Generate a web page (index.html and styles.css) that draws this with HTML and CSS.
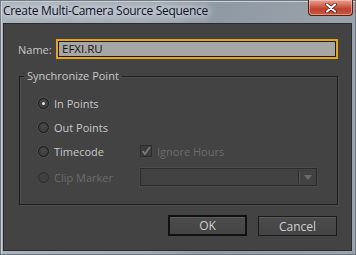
FILE: index.html
```html
<!DOCTYPE html>
<html>
<head>
<meta charset="utf-8">
<link rel="stylesheet" href="styles.css">
</head>
<body>
<div class="window">
  <div class="titlebar">
    <div class="title">Create Multi-Camera Source Sequence</div>
    <div class="close">
      <svg width="14" height="10" viewBox="0 0 14 10"><path d="M3 1.5 L11 8.5 M11 1.5 L3 8.5" stroke="#3a1b18" stroke-width="3.6" stroke-linecap="round"/><path d="M3 1.5 L11 8.5 M11 1.5 L3 8.5" stroke="#fff" stroke-width="2.2" stroke-linecap="round"/></svg>
    </div>
  </div>
  <div class="client">
    <div class="name-row">
      <label class="lbl">Name:</label>
      <div class="input">EFXI.RU</div>
    </div>
    <fieldset class="group">
      <legend class="legend">Synchronize Point</legend>
      <div class="grid">
        <div class="opt"><span class="radio on"></span><span>In Points</span></div>
        <div></div>
        <div class="opt"><span class="radio"></span><span>Out Points</span></div>
        <div></div>
        <div class="opt"><span class="radio"></span><span>Timecode</span></div>
        <div class="opt dis"><span class="check"><svg width="10" height="10" viewBox="0 0 10 10"><path d="M1.5 5 L4 8 L9 1" fill="none" stroke="#7a7a7a" stroke-width="1.8"/></svg></span><span>Ignore Hours</span></div>
        <div class="opt dis"><span class="radio off"></span><span>Clip Marker</span></div>
        <div class="select"><span class="sel-body"></span><span class="sel-arrow"><svg width="8" height="5" viewBox="0 0 8 5"><path d="M0 0 H8 L4 5 Z" fill="#6a6a6a"/></svg></span></div>
      </div>
    </fieldset>
    <div class="buttons">
      <div class="btn default">OK</div>
      <div class="btn">Cancel</div>
    </div>
  </div>
</div>
</body>
</html>
```
FILE: styles.css
```css
html, body {
  margin: 0;
  padding: 0;
}
body {
  width: 356px;
  height: 255px;
  overflow: hidden;
  font-family: "Open Sans", "Noto Sans", sans-serif;
}
.window {
  width: 356px;
  height: 255px;
  box-sizing: border-box;
  background: linear-gradient(90deg, #a9b1b9 0%, #a2abb4 40%, #8f99a3 60%, #9aa3ac 100%);
  border: 1px solid #6d7680;
  box-shadow: inset 1px 1px 0 #c9d0d6;
  display: flex;
  flex-direction: column;
}
.titlebar {
  height: 22px;
  display: flex;
  align-items: flex-start;
}
.title {
  margin: 2px 0 0 2px;
  font-family: "Open Sans", sans-serif;
  font-size: 12px;
  color: #10102a;
  letter-spacing: -0.3px;
  line-height: 16px;
  text-shadow: 0 0 6px #e6eaee, 0 0 10px #dde2e7, 0 0 14px #d5dbe0;
}
.close {
  margin-left: auto;
  margin-right: 2px;
  margin-top: -1px;
  width: 45px;
  height: 16px;
  box-sizing: border-box;
  border: 1px solid #5a1e18;
  border-top: none;
  border-radius: 0 0 4px 4px;
  background: linear-gradient(#e9a393 0%, #d46a57 35%, #c0412d 60%, #c95a3d 100%);
  box-shadow: inset 0 0 0 1px rgba(255,220,210,0.45);
  display: flex;
  align-items: center;
  justify-content: center;
}
.client {
  margin: 0 3px 0 2px;
  height: 228px;
  box-sizing: border-box;
  background: #434343;
  border: 1px solid #2c2c2c;
  color: #c6c6c6;
  font-size: 11px;
  display: flex;
  flex-direction: column;
}
.name-row {
  display: flex;
  align-items: center;
  margin: 15px 0 0 14px;
}
.lbl {
  width: 38px;
}
.input {
  width: 282px;
  height: 20px;
  box-sizing: border-box;
  border: 2px solid #e8a418;
  background: #a6a6a6;
  color: #161616;
  font-size: 11.5px;
  line-height: 16px;
  padding-left: 4px;
  box-shadow: inset 0 0 0 1px #1c1c1c;
}
.group {
  margin: 11px 0 0 15px;
  width: 319px;
  height: 135px;
  box-sizing: border-box;
  border: 1px solid #1e1e1e;
  box-shadow: 1px 1px 0 #4e4e4e, inset 1px 1px 0 #4e4e4e;
  padding: 9px 0 0 0;
}
.legend {
  padding: 0 3px;
  margin-left: 4px;
  font-size: 11px;
  color: #c6c6c6;
  line-height: 12px;
}
.grid {
  margin-left: 18px;
  display: grid;
  grid-template-columns: 102px 177px;
  grid-template-rows: 24px 24px 24px 28px;
  align-items: center;
}
.opt {
  display: flex;
  align-items: center;
  gap: 5px;
}
.radio {
  width: 11px;
  height: 11px;
  box-sizing: border-box;
  border-radius: 50%;
  border: 1px solid #1c1c1c;
  background: radial-gradient(circle at 50% 40%, #4a4a4a, #363636);
  box-shadow: 0 0 0 1px #4d4d4d;
  display: flex;
  align-items: center;
  justify-content: center;
}
.radio.on::after {
  content: "";
  width: 3px;
  height: 3px;
  border-radius: 50%;
  background: #e0e0e0;
}
.radio.off {
  border-color: #2e2e2e;
  box-shadow: 0 0 0 1px #464646;
  background: #3f3f3f;
}
.dis {
  color: #6c6c6c;
}
.check {
  width: 12px;
  height: 12px;
  box-sizing: border-box;
  border: 1px solid #2e2e2e;
  background: #3c3c3c;
  display: flex;
  align-items: center;
  justify-content: center;
}
.select {
  width: 177px;
  height: 18px;
  box-sizing: border-box;
  border: 1px solid #2c2c2c;
  background: #424242;
  box-shadow: 0 0 0 1px #4a4a4a;
  display: flex;
}
.sel-body {
  flex: 1;
  border-right: 1px solid #2c2c2c;
  box-shadow: 1px 0 0 #555;
  margin: 2px 0;
}
.sel-arrow {
  width: 17px;
  display: flex;
  align-items: center;
  justify-content: center;
}
.buttons {
  display: flex;
  justify-content: flex-end;
  gap: 11px;
  margin: 11px 14px 0 0;
}
.btn {
  width: 79px;
  height: 20px;
  box-sizing: border-box;
  border: 1px solid #1c1c1c;
  background: linear-gradient(#4c4c4c, #444444);
  box-shadow: inset 0 1px 0 #5a5a5a;
  color: #cfcfcf;
  font-size: 12px;
  display: flex;
  align-items: center;
  justify-content: center;
}
.btn.default {
  border: 2px solid #111;
  height: 21px;
  margin-top: -1px;
}
```
